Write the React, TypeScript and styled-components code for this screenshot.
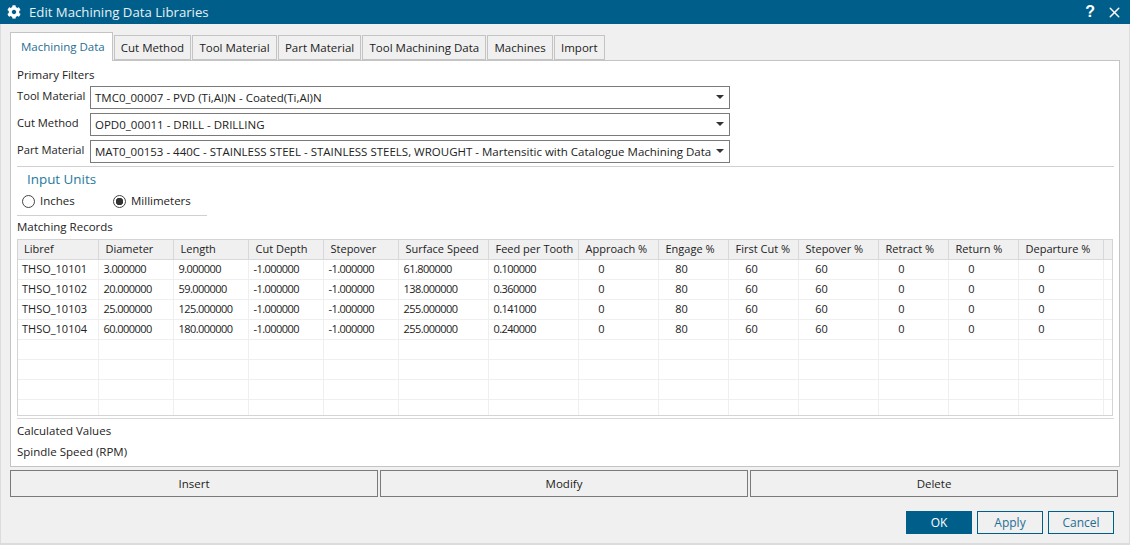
import styled, { createGlobalStyle } from "styled-components";
import type { FC } from "react";
import { FaCog } from "react-icons/fa";
import { X } from "lucide-react";

const GlobalStyle = createGlobalStyle`
  html, body {
    margin: 0;
    padding: 0;
    background: #f0f0f0;
  }
  * {
    box-sizing: border-box;
  }
`;

const TABS = [
  "Machining Data",
  "Cut Method",
  "Tool Material",
  "Part Material",
  "Tool Machining Data",
  "Machines",
  "Import",
];

const FILTERS = [
  { label: "Tool Material", value: "TMC0_00007 - PVD (Ti,Al)N - Coated(Ti,Al)N" },
  { label: "Cut Method", value: "OPD0_00011 - DRILL - DRILLING" },
  {
    label: "Part Material",
    value:
      "MAT0_00153 - 440C - STAINLESS STEEL - STAINLESS STEELS, WROUGHT - Martensitic with Catalogue Machining Data",
  },
];

const COLUMNS = [
  { title: "Libref", width: 80 },
  { title: "Diameter", width: 75 },
  { title: "Length", width: 75 },
  { title: "Cut Depth", width: 75 },
  { title: "Stepover", width: 75 },
  { title: "Surface Speed", width: 90 },
  { title: "Feed per Tooth", width: 90 },
  { title: "Approach %", width: 80 },
  { title: "Engage %", width: 70 },
  { title: "First Cut %", width: 70 },
  { title: "Stepover %", width: 80 },
  { title: "Retract %", width: 70 },
  { title: "Return %", width: 70 },
  { title: "Departure %", width: 85 },
  { title: "", width: 10 },
];

const RECORDS = [
  ["THSO_10101", "3.000000", "9.000000", "-1.000000", "-1.000000", "61.800000", "0.100000"],
  ["THSO_10102", "20.000000", "59.000000", "-1.000000", "-1.000000", "138.000000", "0.360000"],
  ["THSO_10103", "25.000000", "125.000000", "-1.000000", "-1.000000", "255.000000", "0.141000"],
  ["THSO_10104", "60.000000", "180.000000", "-1.000000", "-1.000000", "255.000000", "0.240000"],
];

const PERCENTS = ["0", "80", "60", "60", "0", "0", "0"];

export const App: FC = () => (
  <Dialog>
    <GlobalStyle />
    <TitleBar>
      <FaCog size={14} color="#fff" />
      <TitleText>Edit Machining Data Libraries</TitleText>
      <HelpMark>?</HelpMark>
      <X size={17} color="#fff" strokeWidth={2} />
    </TitleBar>

    <Body>
      <TabRow>
        {TABS.map((tab, i) => (
          <Tab key={tab} $active={i === 0}>
            {tab}
          </Tab>
        ))}
      </TabRow>

      <Panel>
        <Label>Primary Filters</Label>
        <FilterList>
          {FILTERS.map((filter) => (
            <FilterRow key={filter.label}>
              <FilterLabel>{filter.label}</FilterLabel>
              <Combo>
                {filter.value}
                <ComboArrow />
              </Combo>
            </FilterRow>
          ))}
        </FilterList>
        <Rule />

        <GroupTitle>Input Units</GroupTitle>
        <RadioRow>
          <Radio $width={91}>
            <RadioDot />
            Inches
          </Radio>
          <Radio>
            <RadioDot $checked />
            Millimeters
          </Radio>
        </RadioRow>
        <ShortRule />

        <RecordsLabel>Matching Records</RecordsLabel>
        <TableFrame>
          <Table>
            <colgroup>
              {COLUMNS.map((col, i) => (
                <col key={i} width={col.width} />
              ))}
            </colgroup>
            <thead>
              <tr>
                {COLUMNS.map((col, i) => (
                  <HeadCell key={i}>{col.title}</HeadCell>
                ))}
              </tr>
            </thead>
            <tbody>
              {RECORDS.map((record) => (
                <tr key={record[0]}>
                  {record.map((value, i) => (
                    <Cell key={i} $numeric={i > 0}>
                      {value}
                    </Cell>
                  ))}
                  {PERCENTS.map((value, i) => (
                    <Cell key={i}>
                      <Percent>{value}</Percent>
                    </Cell>
                  ))}
                  <Cell />
                </tr>
              ))}
              {[0, 1, 2, 3].map((row) => (
                <tr key={row}>
                  {COLUMNS.map((_, i) => (
                    <Cell key={i} />
                  ))}
                </tr>
              ))}
            </tbody>
          </Table>
        </TableFrame>
        <BottomRule />

        <CalcGroup>
          <CalcLabel>Calculated Values</CalcLabel>
          <CalcLabel>Spindle Speed (RPM)</CalcLabel>
        </CalcGroup>
      </Panel>

      <ActionRow>
        <ActionButton>Insert</ActionButton>
        <ActionButton>Modify</ActionButton>
        <ActionButton>Delete</ActionButton>
      </ActionRow>

      <Footer>
        <FooterButton $primary>OK</FooterButton>
        <FooterButton>Apply</FooterButton>
        <FooterButton>Cancel</FooterButton>
      </Footer>
    </Body>
  </Dialog>
);

export default App;

const Dialog = styled.div`
  width: 1130px;
  height: 545px;
  display: flex;
  flex-direction: column;
  overflow: hidden;
  background: #f0f0f0;
  color: #222;
  font-family: "Open Sans", "Noto Sans", sans-serif;
  font-size: 11.5px;
  line-height: 16px;
`;

const TitleBar = styled.div`
  flex: none;
  height: 24px;
  display: flex;
  align-items: center;
  padding: 0 7px 0 7px;
  background: #005f8a;
  color: #fff;
`;

const TitleText = styled.span`
  flex: 1;
  margin-left: 8px;
  font-size: 13.2px;
  color: #e6f0f5;
`;

const HelpMark = styled.span`
  margin-right: 11px;
  font-family: "Liberation Sans", sans-serif;
  font-size: 16px;
  font-weight: 700;
`;

const Body = styled.div`
  flex: 1;
  display: flex;
  flex-direction: column;
  padding: 8px 10px 0;
  border-left: 1px solid #dcdcdc;
  border-right: 1px solid #dcdcdc;
  border-bottom: 2px solid #dcdcdc;
`;

const TabRow = styled.div`
  flex: none;
  height: 28px;
  display: flex;
  align-items: flex-end;
  margin-left: -1px;
  position: relative;
  z-index: 1;
`;

const Tab = styled.div<{ $active?: boolean }>`
  height: ${({ $active }) => ($active ? "29px" : "25px")};
  margin-bottom: ${({ $active }) => ($active ? "-1px" : "0")};
  padding: ${({ $active }) => ($active ? "6px 7px 0 10px" : "4px 6.15px 0 6.15px")};
  margin-right: 1px;
  background: ${({ $active }) => ($active ? "#fff" : "#f0f0f0")};
  border: 1px solid #c4c4c4;
  border-bottom: ${({ $active }) => ($active ? "none" : "1px solid #c4c4c4")};
  color: ${({ $active }) => ($active ? "#1f6f93" : "#222")};
  white-space: nowrap;
`;

const Panel = styled.div`
  flex: none;
  width: 1110px;
  height: 407px;
  margin-left: -1px;
  padding: 6px 5px 0 6px;
  background: #fff;
  border: 1px solid #c4c4c4;
`;

const Label = styled.div`
  height: 16px;
`;

const FilterList = styled.div`
  display: flex;
  flex-direction: column;
  gap: 4px;
  margin-top: 3px;
`;

const FilterRow = styled.div`
  display: flex;
  align-items: center;
  height: 23px;
`;

const FilterLabel = styled.span`
  width: 73px;
  margin-top: -3px;
  font-size: 11.2px;
`;

const Combo = styled.div`
  position: relative;
  width: 640px;
  height: 23px;
  padding: 3px 0 0 4px;
  border: 1px solid #7a7a7a;
  background: #fff;
  white-space: nowrap;
`;

const ComboArrow = styled.span`
  position: absolute;
  right: 5px;
  top: 8px;
  border-left: 4px solid transparent;
  border-right: 4px solid transparent;
  border-top: 4px solid #333;
`;

const Rule = styled.div`
  height: 1px;
  margin-top: 3px;
  background: #d0d0d0;
`;

const GroupTitle = styled.div`
  margin: 4px 0 0 10px;
  height: 17px;
  line-height: 17px;
  font-size: 13.4px;
  color: #1f7a9c;
`;

const RadioRow = styled.div`
  display: flex;
  margin: 5px 0 0 5px;
  height: 16px;
  align-items: center;
`;

const Radio = styled.label<{ $width?: number }>`
  display: flex;
  align-items: center;
  gap: 5px;
  width: ${({ $width }) => ($width ? `${$width}px` : "auto")};
`;

const RadioDot = styled.span<{ $checked?: boolean }>`
  width: 13px;
  height: 13px;
  border-radius: 50%;
  border: 1px solid #444;
  background: ${({ $checked }) =>
    $checked
      ? "radial-gradient(circle, #333 0, #333 3.5px, #fff 4px)"
      : "#fff"};
`;

const ShortRule = styled.div`
  width: 190px;
  height: 1px;
  margin-top: 6px;
  background: #d0d0d0;
`;

const RecordsLabel = styled.div`
  height: 16px;
  margin-top: 3px;
`;

const TableFrame = styled.div`
  width: 1096px;
  height: 177px;
  margin-top: 4px;
  border: 1px solid #d4d4d4;
  overflow: hidden;
  font-size: 11px;
`;

const Table = styled.table`
  width: 1095px;
  table-layout: fixed;
  border-collapse: collapse;
  border-spacing: 0;
`;

const HeadCell = styled.th`
  height: 19px;
  padding: 0 0 0 7px;
  background: #f0f0f0;
  border-right: 1px solid #d8d8d8;
  border-bottom: 1px solid #d8d8d8;
  font-weight: 400;
  text-align: left;
  white-space: nowrap;
  overflow: hidden;
  &:first-child {
    padding-left: 6px;
  }
`;

const Cell = styled.td<{ $numeric?: boolean }>`
  height: 20px;
  padding: 0 0 1px 5px;
  border-right: 1px solid #efefef;
  border-bottom: 1px solid #efefef;
  letter-spacing: ${({ $numeric }) => ($numeric ? "-0.55px" : "0")};
  white-space: nowrap;
  overflow: hidden;
  &:first-child {
    padding-left: 4px;
  }
`;

const Percent = styled.span`
  display: inline-block;
  width: 16px;
  margin-left: 10px;
  text-align: center;
`;

const BottomRule = styled.div`
  height: 1px;
  margin-top: 2px;
  background: #d8d8d8;
`;

const CalcGroup = styled.div`
  margin-top: 1px;
`;

const CalcLabel = styled.div`
  height: 21px;
  padding-top: 3px;
`;

const ActionRow = styled.div`
  flex: none;
  display: flex;
  gap: 2px;
  width: 1108px;
  margin: 3px 0 0 -1px;
`;

const ActionButton = styled.button`
  flex: 1;
  height: 27px;
  padding: 0;
  border: 1px solid #7a7a7a;
  background: #f0f0f0;
  color: #222;
  font: inherit;
`;

const Footer = styled.div`
  flex: none;
  display: flex;
  justify-content: flex-end;
  gap: 5px;
  margin-top: 14px;
  padding-right: 5px;
`;

const FooterButton = styled.button<{ $primary?: boolean }>`
  width: 66px;
  height: 23px;
  padding: 0;
  border: 1px solid #005f8a;
  background: ${({ $primary }) => ($primary ? "#005f8a" : "#f0f0f0")};
  color: ${({ $primary }) => ($primary ? "#fff" : "#1f6f93")};
  font: inherit;
  font-size: 12px;
`;
